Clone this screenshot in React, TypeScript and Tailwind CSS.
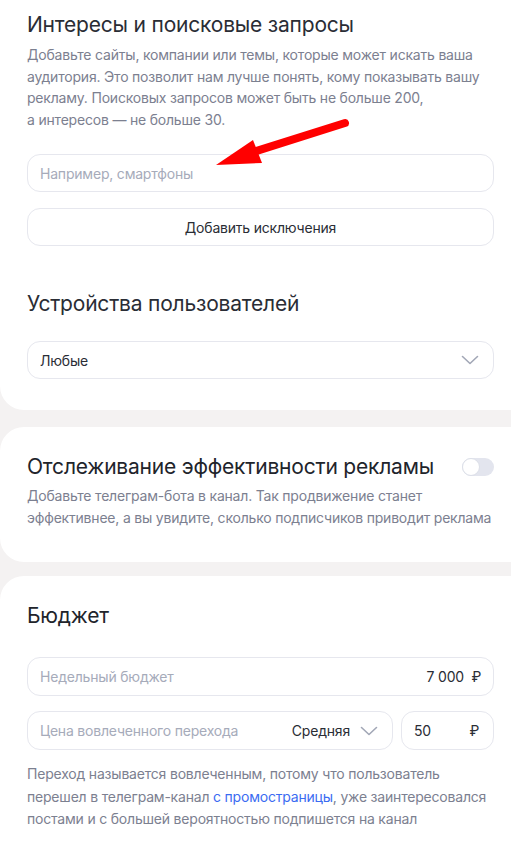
import React from "react";

const font = { fontFamily: "Inter, 'Noto Sans', sans-serif" };

function Chevron() {
  return (
    <svg width="18" height="10" viewBox="0 0 18 10" fill="none">
      <path d="M1.5 1.5 L9 8.5 L16.5 1.5" stroke="#a2a7b6" strokeWidth="1.6" strokeLinecap="round" strokeLinejoin="round" />
    </svg>
  );
}

export default function App() {
  return (
    <div className="min-h-[856px] bg-[#f4f2f2] text-[#21242b] relative overflow-hidden tracking-[-0.2px]" style={font}>
      {/* Card 1 */}
      <div className="bg-white rounded-bl-[24px] pl-[27px] pr-[17px] pt-[11px] pb-[31px]">
        <h2 className="text-[21px] leading-[28px] text-[#2a2d35]">Интересы и поисковые запросы</h2>
        <p className="mt-[5px] text-[14px] leading-[21.5px] text-[#7c8090]">
          Добавьте сайты, компании или темы, которые может искать ваша аудитория. Это позволит нам лучше понять, кому показывать вашу рекламу. Поисковых запросов может быть не больше 200,
          <br />а интересов — не больше 30.
        </p>
        <div className="mt-[24px] h-[38px] rounded-[13px] border border-[#e6e7ee] flex items-center px-[12px] text-[14px] text-[#a6abba]">
          Например, смартфоны
        </div>
        <div className="mt-[16px] h-[38px] rounded-[13px] border border-[#e6e7ee] flex items-center justify-center text-[14px] text-[#2a2d35]">
          Добавить исключения
        </div>
        <h2 className="mt-[44px] text-[21px] leading-[28px] text-[#2a2d35]">Устройства пользователей</h2>
        <div className="mt-[23px] h-[38px] rounded-[13px] border border-[#e6e7ee] flex items-center justify-between pl-[12px] pr-[14px] text-[14px] text-[#2a2d35]">
          <span>Любые</span>
          <Chevron />
        </div>
      </div>

      {/* Card 2 */}
      <div className="mt-[17px] bg-white rounded-l-[24px] pl-[27px] pr-[17px] pt-[26px] pb-[34px]">
        <div className="flex items-center justify-between">
          <h2 className="text-[21px] leading-[28px] text-[#21242b]">Отслеживание эффективности рекламы</h2>
          <div className="w-[32px] h-[18px] rounded-full bg-[#e3e5ee] relative">
            <div className="absolute left-0 top-0 w-[18px] h-[18px] rounded-full bg-white border border-[#dcdfe8]" />
          </div>
        </div>
        <p className="mt-[4px] text-[14px] leading-[21.5px] text-[#7c8090]">
          Добавьте телеграм-бота в канал. Так продвижение станет эффективнее, а вы увидите, сколько подписчиков приводит реклама
        </p>
      </div>

      {/* Card 3 */}
      <div className="mt-[14px] bg-white rounded-tl-[24px] pl-[27px] pr-[17px] pt-[26px] pb-[40px]">
        <h2 className="text-[21px] leading-[28px] text-[#21242b]">Бюджет</h2>
        <div className="mt-[27px] h-[39px] rounded-[13px] border border-[#e6e7ee] flex items-center justify-between pl-[12px] pr-[12px] text-[14px]">
          <span className="text-[#a6abba]">Недельный бюджет</span>
          <span className="text-[#2a2d35]">7 000&nbsp;&nbsp;₽</span>
        </div>
        <div className="mt-[15px] flex gap-[8px]">
          <div className="flex-1 h-[39px] rounded-[13px] border border-[#e6e7ee] flex items-center pl-[12px] pr-[14px] text-[14px]">
            <span className="flex-1 text-[#a6abba]">Цена вовлеченного перехода</span>
            <span className="text-[#2a2d35] mr-[10px]">Средняя</span>
            <Chevron />
          </div>
          <div className="w-[93px] h-[39px] rounded-[13px] border border-[#e6e7ee] flex items-center justify-between pl-[12px] pr-[14px] text-[14px] text-[#2a2d35]">
            <span>50</span>
            <span>₽</span>
          </div>
        </div>
        <p className="mt-[13px] text-[14px] leading-[22.5px] text-[#7c8090]">
          Переход называется вовлеченным, потому что пользователь перешел в телеграм-канал{" "}
          <span className="text-[#3b6cf2]">с промостраницы</span>, уже заинтересовался постами и с большей вероятностью подпишется на канал
        </p>
      </div>

      {/* Red arrow overlay */}
      <svg className="absolute left-0 top-0 pointer-events-none" width="511" height="200" viewBox="0 0 511 200">
        <line x1="345" y1="123" x2="250" y2="153" stroke="#ff0000" strokeWidth="8" strokeLinecap="round" />
        <polygon points="216,165 253,140 262,163" fill="#ff0000" />
      </svg>
    </div>
  );
}
